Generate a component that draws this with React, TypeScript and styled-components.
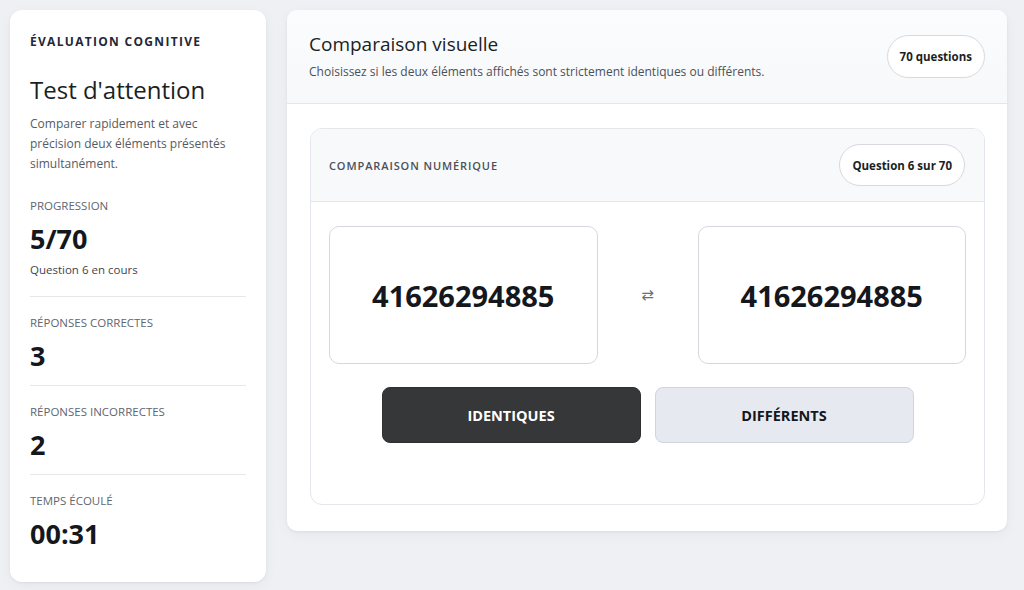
import styled, {createGlobalStyle} from 'styled-components'

const GlobalStyle = createGlobalStyle`
  * { box-sizing: border-box; }
  body {
    margin: 0;
    background: #eef0f4;
    font-family: 'Open Sans', 'Noto Sans', sans-serif;
    color: #1b1f24;
  }
`

const stats = [
  {label: 'Réponses correctes', value: '3'},
  {label: 'Réponses incorrectes', value: '2'},
  {label: 'Temps écoulé', value: '00:31'},
]

function App() {
  return (
    <>
      <GlobalStyle />
      <Page>
        <Sidebar>
          <Eyebrow>Évaluation cognitive</Eyebrow>
          <SideTitle>Test d'attention</SideTitle>
          <SideText>
            Comparer rapidement et avec précision deux éléments présentés simultanément.
          </SideText>
          <Stat>
            <StatLabel>Progression</StatLabel>
            <StatValue>5/70</StatValue>
            <StatNote>Question 6 en cours</StatNote>
          </Stat>
          {stats.map((s, i) => (
            <Stat key={s.label} $last={i === stats.length - 1}>
              <StatLabel>{s.label}</StatLabel>
              <StatValue>{s.value}</StatValue>
            </Stat>
          ))}
        </Sidebar>

        <Main>
          <MainHeader>
            <div>
              <MainTitle>Comparaison visuelle</MainTitle>
              <MainText>
                Choisissez si les deux éléments affichés sont strictement identiques ou différents.
              </MainText>
            </div>
            <Pill>70 questions</Pill>
          </MainHeader>

          <MainBody>
            <Task>
              <TaskHeader>
                <TaskLabel>Comparaison numérique</TaskLabel>
                <Pill>Question 6 sur 70</Pill>
              </TaskHeader>
              <TaskBody>
                <Pair>
                  <Item>41626294885</Item>
                  <Swap>⇄</Swap>
                  <Item>41626294885</Item>
                </Pair>
                <Actions>
                  <Choice $primary>Identiques</Choice>
                  <Choice>Différents</Choice>
                </Actions>
              </TaskBody>
            </Task>
          </MainBody>
        </Main>
      </Page>
    </>
  )
}

export default App

const Page = styled.div`
  display: grid;
  grid-template-columns: 256px 720px;
  column-gap: 21px;
  align-items: start;
  padding: 10px;
`

const Sidebar = styled.aside`
  background: #fff;
  border-radius: 12px;
  box-shadow: 0 1px 3px rgba(15, 23, 42, 0.06), 0 4px 14px rgba(15, 23, 42, 0.04);
  padding: 24px 20px;
  min-height: 572px;
`

const Eyebrow = styled.div`
  font-size: 12px;
  line-height: 16px;
  font-weight: 700;
  letter-spacing: 1.3px;
  text-transform: uppercase;
  color: #1f2937;
`

const SideTitle = styled.h1`
  margin: 24px 0 8px;
  font-size: 24px;
  line-height: 32px;
  font-weight: 400;
  color: #1b1f24;
`

const SideText = styled.p`
  margin: 0 0 24px;
  font-size: 12px;
  line-height: 20px;
  color: #555b63;
`

const Stat = styled.div<{$last?: boolean}>`
  padding: ${({$last}) => ($last ? '18px 0 0' : '0 0 14px')};
  border-bottom: ${({$last}) => ($last ? 'none' : '1px solid #e5e7eb')};
  & + & {
    padding-top: 18px;
  }
`

const StatLabel = styled.div`
  font-size: 11.5px;
  line-height: 16px;
  text-transform: uppercase;
  color: #5f6670;
  margin-bottom: 10px;
`

const StatValue = styled.div`
  font-size: 27px;
  line-height: 30px;
  font-weight: 700;
  color: #14171c;
`

const StatNote = styled.div`
  margin: 8px 0 4px;
  font-size: 11.5px;
  line-height: 16px;
  color: #3f454d;
`

const Main = styled.main`
  background: #fff;
  border-radius: 10px;
  box-shadow: 0 1px 3px rgba(15, 23, 42, 0.06), 0 4px 14px rgba(15, 23, 42, 0.04);
  overflow: hidden;
`

const MainHeader = styled.header`
  display: flex;
  align-items: center;
  justify-content: space-between;
  padding: 21px 22px 22px 22px;
  background: linear-gradient(#fbfcfd, #f7f8fa);
  border-bottom: 1px solid #e3e6ea;
`

const MainTitle = styled.h2`
  margin: 0 0 6px;
  font-size: 19px;
  line-height: 26px;
  font-weight: 400;
  color: #1b1f24;
`

const MainText = styled.p`
  margin: 0;
  font-size: 12px;
  line-height: 18px;
  color: #4b5159;
`

const Pill = styled.span`
  display: inline-flex;
  align-items: center;
  justify-content: center;
  height: 43px;
  padding: 0 12px;
  border: 1px solid #d6d9de;
  border-radius: 999px;
  background: #fff;
  font-size: 11.5px;
  font-weight: 700;
  color: #1b1f24;
  white-space: nowrap;
`

const MainBody = styled.div`
  padding: 24px 22px 26px 23px;
`

const Task = styled.section`
  border: 1px solid #e3e6ea;
  border-radius: 12px;
  overflow: hidden;
`

const TaskHeader = styled.div`
  display: flex;
  align-items: center;
  justify-content: space-between;
  height: 73px;
  padding: 0 19px 0 18px;
  background: #f8f9fb;
  border-bottom: 1px solid #e3e6ea;

  ${Pill} {
    height: 42px;
  }
`

const TaskLabel = styled.div`
  font-size: 11px;
  font-weight: 600;
  letter-spacing: 0.9px;
  text-transform: uppercase;
  color: #4b5159;
`

const TaskBody = styled.div`
  padding: 24px 18px 61px;
  display: flex;
  flex-direction: column;
  align-items: center;
  gap: 23px;
`

const Pair = styled.div`
  width: 100%;
  display: grid;
  grid-template-columns: 1fr 100px 1fr;
  align-items: center;
`

const Item = styled.div`
  height: 138px;
  display: flex;
  align-items: center;
  justify-content: center;
  border: 1px solid #d5d8dd;
  border-radius: 10px;
  background: #fff;
  font-size: 29px;
  font-weight: 700;
  color: #14171c;
`

const Swap = styled.div`
  text-align: center;
  font-size: 15px;
  color: #6b7078;
  font-family: 'DejaVu Sans', sans-serif;
`

const Actions = styled.div`
  display: flex;
  gap: 14px;
`

const Choice = styled.button<{$primary?: boolean}>`
  width: 259px;
  height: 56px;
  border-radius: 8px;
  border: 1px solid ${({$primary}) => ($primary ? '#2f3032' : '#cfd5dd')};
  background: ${({$primary}) => ($primary ? '#363739' : '#e6eaf0')};
  color: ${({$primary}) => ($primary ? '#fff' : '#14171c')};
  font-family: inherit;
  font-size: 14.5px;
  font-weight: 700;
  text-transform: uppercase;
  cursor: pointer;
`
